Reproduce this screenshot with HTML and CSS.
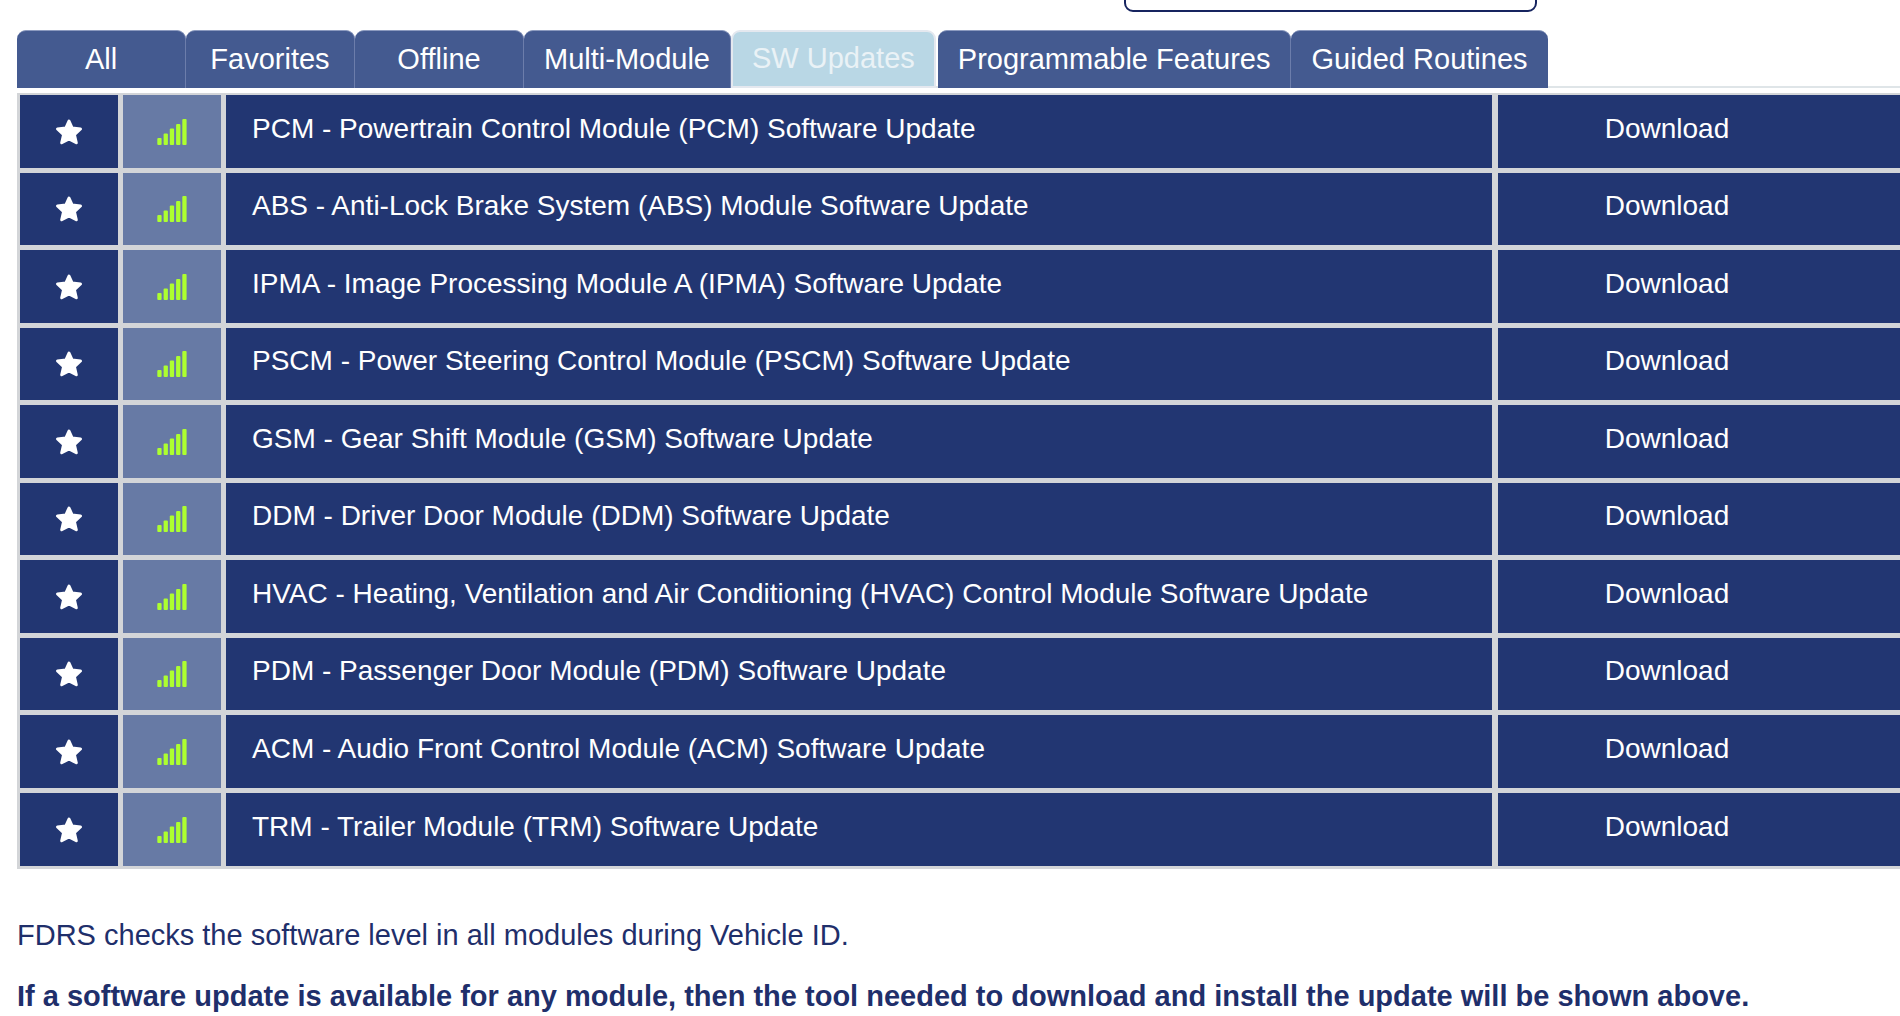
FILE: index.html
```html
<!DOCTYPE html>
<html lang="en">
<head>
<meta charset="utf-8">
<title>SW Updates</title>
<link rel="stylesheet" href="styles.css">
</head>
<body>
<svg class="sprite" aria-hidden="true">
  <symbol id="star" viewBox="0 0 28 28">
    <path d="M14 3 L17.2 10 L25.5 11 L19.4 16.6 L21.3 24.8 L14 20.9 L6.7 24.8 L8.6 16.6 L2.5 11 L10.8 10 Z" fill="#fff" stroke="#fff" stroke-width="3" stroke-linejoin="round"/>
  </symbol>
  <symbol id="signal" viewBox="0 0 30 28">
    <g fill="#adff2f">
      <rect x="0.3" y="20" width="4.3" height="7" rx="1"/>
      <rect x="6.6" y="15.5" width="4.3" height="11.5" rx="1"/>
      <rect x="12.8" y="10.5" width="4.3" height="16.5" rx="1"/>
      <rect x="19.1" y="6" width="4.3" height="21" rx="1"/>
      <rect x="25.3" y="1" width="4.3" height="26" rx="1"/>
    </g>
  </symbol>
</svg>
<header class="topbar"><input class="search" type="text" aria-label="Search"></header>
<main class="page">
  <nav class="tabs">
    <button class="tab">All</button>
    <button class="tab">Favorites</button>
    <button class="tab">Offline</button>
    <button class="tab">Multi-Module</button>
    <button class="tab active">SW Updates</button>
    <button class="tab">Programmable Features</button>
    <button class="tab">Guided Routines</button>
  </nav>
  <table class="modules">
    <colgroup><col class="col-icon"><col class="col-icon"><col><col class="col-action"></colgroup>
    <tbody>
      <tr><td><button class="fav" aria-label="Favorite"><svg class="star"><use href="#star"/></svg></button></td><td class="level"><svg class="signal"><use href="#signal"/></svg></td><td class="name">PCM - Powertrain Control Module (PCM) Software Update</td><td class="action"><button class="download">Download</button></td></tr>
      <tr><td><button class="fav" aria-label="Favorite"><svg class="star"><use href="#star"/></svg></button></td><td class="level"><svg class="signal"><use href="#signal"/></svg></td><td class="name">ABS - Anti-Lock Brake System (ABS) Module Software Update</td><td class="action"><button class="download">Download</button></td></tr>
      <tr><td><button class="fav" aria-label="Favorite"><svg class="star"><use href="#star"/></svg></button></td><td class="level"><svg class="signal"><use href="#signal"/></svg></td><td class="name">IPMA - Image Processing Module A (IPMA) Software Update</td><td class="action"><button class="download">Download</button></td></tr>
      <tr><td><button class="fav" aria-label="Favorite"><svg class="star"><use href="#star"/></svg></button></td><td class="level"><svg class="signal"><use href="#signal"/></svg></td><td class="name">PSCM - Power Steering Control Module (PSCM) Software Update</td><td class="action"><button class="download">Download</button></td></tr>
      <tr><td><button class="fav" aria-label="Favorite"><svg class="star"><use href="#star"/></svg></button></td><td class="level"><svg class="signal"><use href="#signal"/></svg></td><td class="name">GSM - Gear Shift Module (GSM) Software Update</td><td class="action"><button class="download">Download</button></td></tr>
      <tr><td><button class="fav" aria-label="Favorite"><svg class="star"><use href="#star"/></svg></button></td><td class="level"><svg class="signal"><use href="#signal"/></svg></td><td class="name">DDM - Driver Door Module (DDM) Software Update</td><td class="action"><button class="download">Download</button></td></tr>
      <tr><td><button class="fav" aria-label="Favorite"><svg class="star"><use href="#star"/></svg></button></td><td class="level"><svg class="signal"><use href="#signal"/></svg></td><td class="name">HVAC - Heating, Ventilation and Air Conditioning (HVAC) Control Module Software Update</td><td class="action"><button class="download">Download</button></td></tr>
      <tr><td><button class="fav" aria-label="Favorite"><svg class="star"><use href="#star"/></svg></button></td><td class="level"><svg class="signal"><use href="#signal"/></svg></td><td class="name">PDM - Passenger Door Module (PDM) Software Update</td><td class="action"><button class="download">Download</button></td></tr>
      <tr><td><button class="fav" aria-label="Favorite"><svg class="star"><use href="#star"/></svg></button></td><td class="level"><svg class="signal"><use href="#signal"/></svg></td><td class="name">ACM - Audio Front Control Module (ACM) Software Update</td><td class="action"><button class="download">Download</button></td></tr>
      <tr><td><button class="fav" aria-label="Favorite"><svg class="star"><use href="#star"/></svg></button></td><td class="level"><svg class="signal"><use href="#signal"/></svg></td><td class="name">TRM - Trailer Module (TRM) Software Update</td><td class="action"><button class="download">Download</button></td></tr>
    </tbody>
  </table>
  <div class="notes">
    <p>FDRS checks the software level in all modules during Vehicle ID.</p>
    <p class="strong">If a software update is available for any module, then the tool needed to download and install the update will be shown above.</p>
  </div>
</main>
</body>
</html>
```
FILE: styles.css
```css
* {
  box-sizing: border-box;
}

body {
  margin: 0;
  background: #fff;
  color: #1f2f6b;
  font-family: "Liberation Sans", Arial, sans-serif;
}

button {
  margin: 0;
  padding: 0;
  border: 0;
  background: none;
  color: inherit;
  font: inherit;
  cursor: pointer;
}

.sprite {
  display: none;
}

.topbar {
  display: flex;
  justify-content: flex-end;
  align-items: flex-end;
  height: 12px;
  padding-right: 363px;
  overflow: hidden;
}

.search {
  flex: none;
  width: 413px;
  height: 56px;
  border: 2px solid #16245f;
  border-radius: 9px;
  background: #fff;
}

.page {
  padding: 18px 0 0 17px;
}

.tabs {
  display: flex;
  border-bottom: 2px solid #dfe5e8;
  height: 58px;
  margin-bottom: 5px;
}

.tab {
  height: 58px;
  min-width: 169px;
  padding: 0 20px 2px;
  border-top: 1px solid #8c9abf;
  border-right: 1px solid #6c7dab;
  border-radius: 9px 9px 0 0;
  background: #445a90;
  color: #fff;
  font-size: 29px;
  line-height: 34px;
  white-space: nowrap;
}

.tab:last-child {
  border-right: 0;
}

.tab.active {
  margin-right: 2px;
  padding: 0 19px 2px;
  border: 2px solid #e4e8ef;
  background: #b9d7e5;
  color: #eaf2f6;
}

.modules {
  width: 100%;
  table-layout: fixed;
  border: solid #d3d5d8;
  border-width: 2px 0 0 3px;
  border-spacing: 0;
  color: #fff;
  font-size: 28px;
  line-height: 32px;
}

.col-icon {
  width: 103px;
}

.col-action {
  width: 402px;
}

.modules tr {
  height: 77px;
}

.modules tr:nth-child(odd) {
  height: 78px;
}

.modules tr:last-child {
  height: 76px;
}

.modules td {
  padding: 0;
  border: solid #d3d5d8;
  border-width: 0 5px 5px 0;
  background: #223672;
  text-align: center;
  vertical-align: middle;
}

.modules tr:last-child td {
  border-bottom-width: 3px;
}

.modules .level {
  background: #677aa5;
}

.modules .name {
  padding: 0 26px 6px;
  border-right-width: 6px;
  text-align: left;
}

.modules .action {
  padding: 0 64px 6px 0;
  border-right-width: 0;
}

.fav,
.star,
.signal,
.download {
  display: block;
  margin: 0 auto;
}

.star {
  width: 28px;
  height: 28px;
}

.signal {
  width: 30px;
  height: 28px;
}

.notes {
  padding-top: 48px;
  font-size: 29px;
  line-height: 36px;
}

.notes p {
  margin: 0 0 25px;
}

.notes p:last-child {
  margin-bottom: 0;
}

.strong {
  font-weight: bold;
}
```
